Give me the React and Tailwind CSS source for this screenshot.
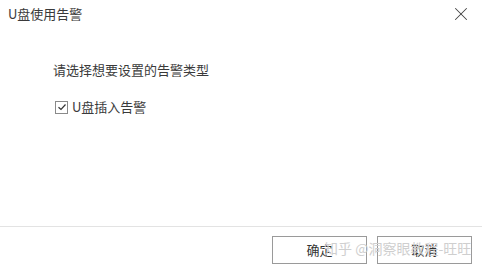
import { X } from "lucide-react";

function CheckBox() {
  return (
    <span className="w-[13px] h-[13px] border border-[#8a8a8a] bg-white flex items-center justify-center">
      <svg width="10" height="10" viewBox="0 0 10 10" fill="none">
        <path d="M1.5 5.2 L4 7.5 L8.5 2.5" stroke="#333" strokeWidth="1.2" />
      </svg>
    </span>
  );
}

export default function App() {
  return (
    <div
      className="relative w-[482px] h-[274px] bg-white text-[#3a3a3a] flex flex-col overflow-hidden"
      style={{ fontFamily: '"Noto Sans CJK SC", "Microsoft YaHei", sans-serif' }}
    >
      <div className="h-[27px] flex items-center justify-between pl-[8px] pr-[10px]">
        <span className="text-[13px] leading-none">U盘使用告警</span>
        <X size={22} strokeWidth={1.1} className="text-[#444]" />
      </div>

      <div className="flex-1 pl-[53px] pt-[35px]">
        <div className="text-[13px] leading-[16px]">请选择想要设置的告警类型</div>
        <div className="mt-[21px] flex items-center gap-[4px] pl-[2px]">
          <CheckBox />
          <span className="text-[13px] leading-[16px]">U盘插入告警</span>
        </div>
      </div>

      <div className="h-[1px] bg-[#e3e3e3]" />

      <div className="h-[47px] flex items-start justify-end gap-[10px] pt-[9px] pr-[10px]">
        <button className="w-[95px] h-[28px] border border-[#9a9a9a] bg-white text-[13px] text-[#333]">
          确定
        </button>
        <button className="w-[95px] h-[28px] border border-[#9a9a9a] bg-white text-[13px] text-[#333]">
          取消
        </button>
      </div>

      <div className="absolute left-[324px] top-[241px] text-[14px] leading-none text-[#cfcfcf] whitespace-nowrap pointer-events-none">
        知乎 @洞察眼教程-旺旺
      </div>
    </div>
  );
}
